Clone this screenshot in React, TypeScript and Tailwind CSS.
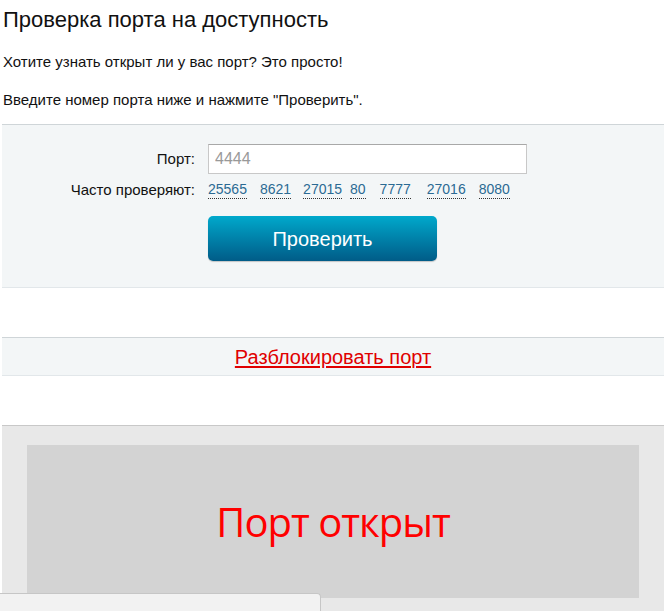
const popular = [
    { port: "25565", gap: "ml-0" },
    { port: "8621", gap: "ml-[13px]" },
    { port: "27015", gap: "ml-[12px]" },
    { port: "80", gap: "ml-[8px]" },
    { port: "7777", gap: "ml-[14px]" },
    { port: "27016", gap: "ml-[16px]" },
    { port: "8080", gap: "ml-[13px]" },
]

export default function App() {
    return (
        <div className="relative h-[611px] overflow-hidden bg-white px-[2px] font-['Liberation_Sans',Arial,sans-serif] text-[#111]">
            <h1 className="pl-[1px] pt-[8px] text-[22px] leading-[24px] font-normal">Проверка порта на доступность</h1>
            <p className="pl-[1px] pt-[21px] text-[15px] leading-[17px]">Хотите узнать открыт ли у вас порт? Это просто!</p>
            <p className="pl-[1px] pt-[21px] text-[15px] leading-[17px]">Введите номер порта ниже и нажмите "Проверить".</p>

            {/* check form */}
            <div className="mt-[16px] h-[164px] border-t border-b border-t-[#cfd5d8] border-b-[#e2e7ea] bg-[#f3f6f7] pt-[19px]">
                <div className="flex items-center">
                    <label className="w-[194px] pr-[1px] text-right text-[15px]">Порт:</label>
                    <input
                        className="ml-[12px] h-[30px] w-[319px] border border-[#c8c8c8] border-t-[#a8a8a8] bg-white px-[6px] text-[16px] outline-none placeholder:text-[#999]"
                        placeholder="4444"
                    />
                </div>
                <div className="mt-[6px] flex items-center leading-[18px]">
                    <span className="w-[194px] pr-[1px] text-right text-[15px]">Часто проверяют:</span>
                    <div className="ml-[12px] flex text-[14px]">
                        {popular.map((p) => (
                            <a key={p.port} className={`${p.gap} cursor-pointer border-b border-dotted border-[#333] text-[#2b6a93]`}>{p.port}</a>
                        ))}
                    </div>
                </div>
                <button className="mt-[17px] ml-[206px] h-[45px] w-[229px] rounded-[5px] bg-gradient-to-b from-[#00a9cc] to-[#005c88] text-[20px] text-white shadow-[0_1px_1px_rgba(0,0,0,0.2)]">
                    Проверить
                </button>
            </div>

            {/* unblock */}
            <div className="mt-[49px] flex h-[39px] items-center justify-center border-t border-b border-t-[#cfd5d8] border-b-[#e2e7ea] bg-[#f3f6f7]">
                <a className="cursor-pointer text-[20px] text-[#e00000] underline underline-offset-[2px]">Разблокировать порт</a>
            </div>

            {/* result */}
            <div className="mt-[49px] h-[200px] border-t border-[#c8c8c8] bg-[#e8e8e8] px-[25px] pt-[19px]">
                <div className="flex h-[153px] items-center justify-center bg-[#d3d3d3]">
                    <span className="font-['Open_Sans',sans-serif] text-[40px] tracking-[-1px] text-[#ff0000]">Порт открыт</span>
                </div>
            </div>

            <div className="absolute bottom-0 left-0 h-[18px] w-[321px] rounded-tr-[4px] border-t border-r border-[#c6c6c6] bg-[#f2f2f2]" />
        </div>
    )
}
